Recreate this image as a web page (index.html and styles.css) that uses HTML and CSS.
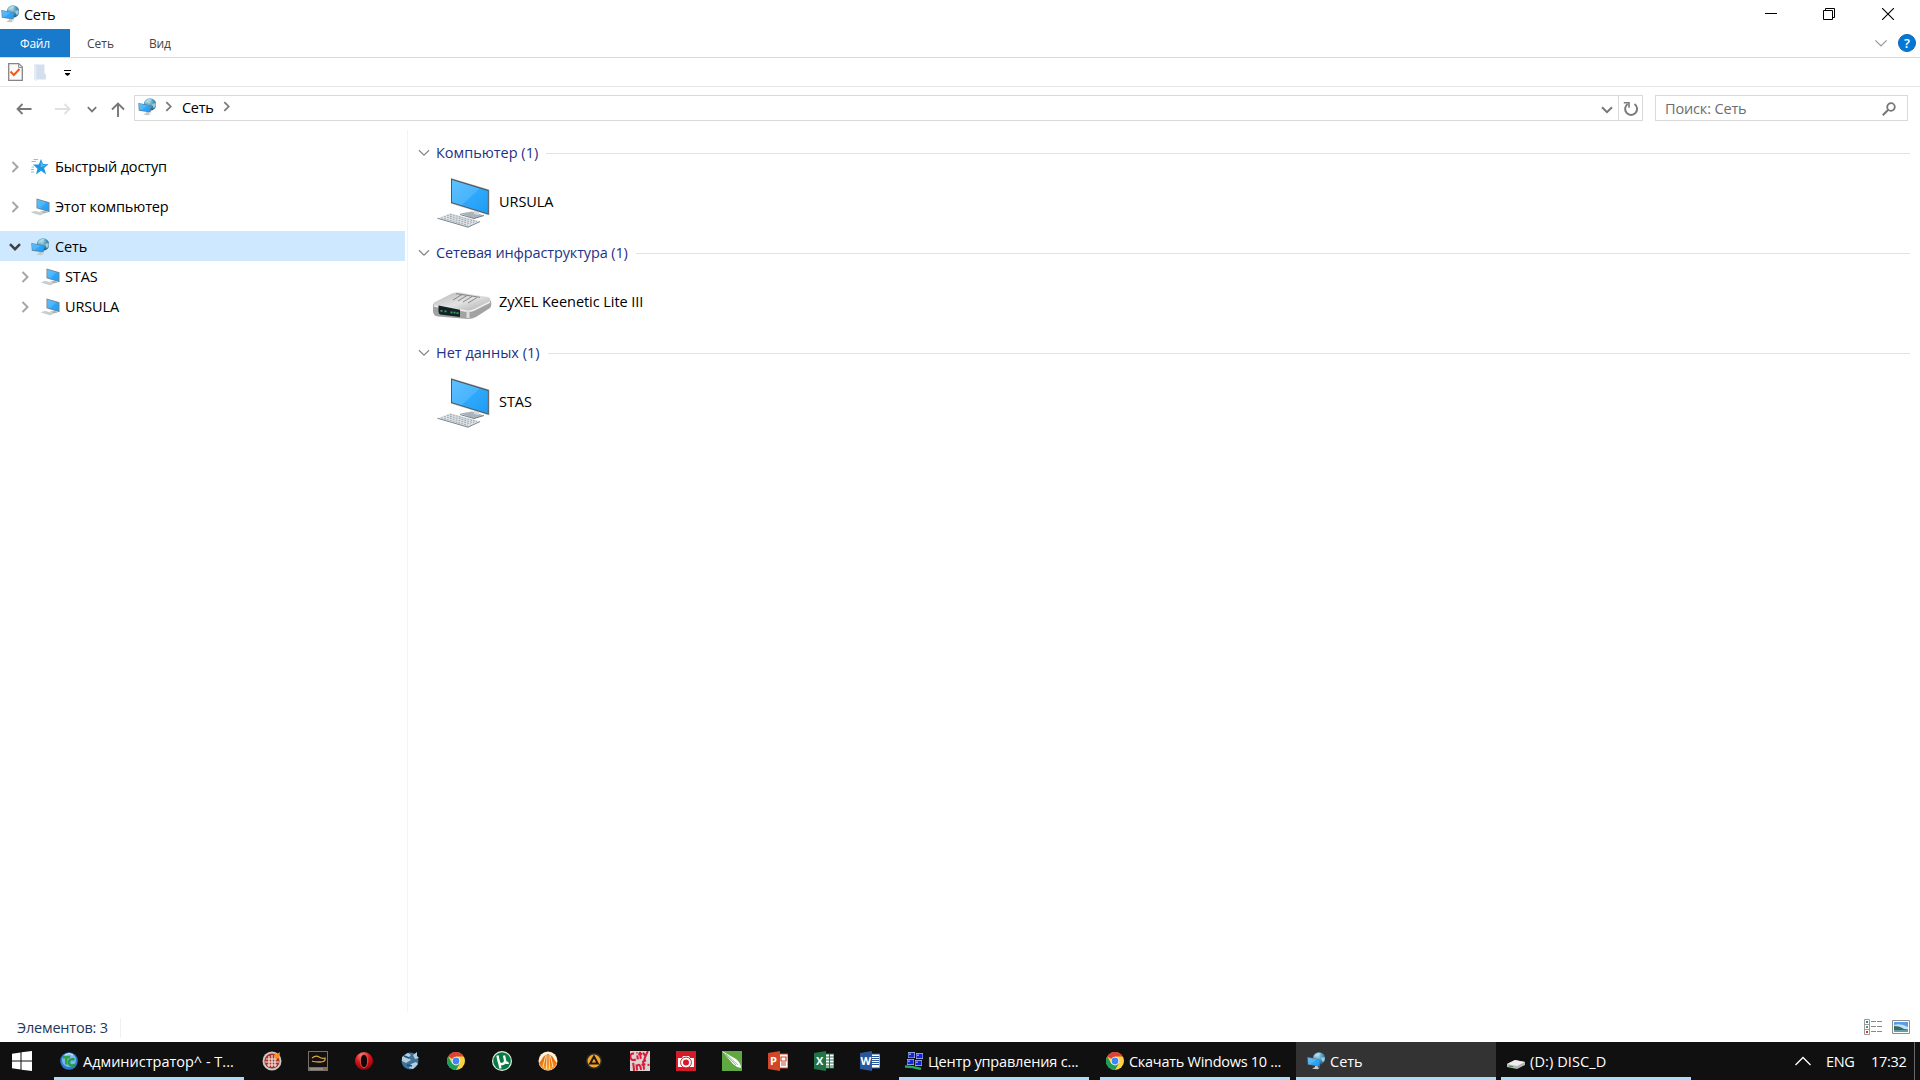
FILE: index.html
```html
<!DOCTYPE html>
<html lang="ru">
<head>
<meta charset="utf-8">
<title>Сеть</title>
<link rel="stylesheet" href="styles.css">
</head>
<body>
<svg class="defs" width="0" height="0" aria-hidden="true">
  <defs>
    <linearGradient id="screen" x1="0" y1="0" x2="1" y2="1"><stop offset="0" stop-color="#5fc0ff"/><stop offset=".5" stop-color="#49b4fc"/><stop offset=".52" stop-color="#2fa8fb"/><stop offset="1" stop-color="#1d9cf5"/></linearGradient>
    <radialGradient id="globe" cx=".4" cy=".3" r=".7"><stop offset="0" stop-color="#a5d8ea"/><stop offset=".55" stop-color="#4f98bb"/><stop offset="1" stop-color="#235e85"/></radialGradient>
    <linearGradient id="metal" x1="0" y1="0" x2="1" y2="1"><stop offset="0" stop-color="#b5b5b5"/><stop offset=".5" stop-color="#e2e2e2"/><stop offset="1" stop-color="#a9a9a9"/></linearGradient>
    <radialGradient id="red" cx=".4" cy=".2" r=".8"><stop offset="0" stop-color="#ff8a86"/><stop offset=".5" stop-color="#d8161b"/><stop offset="1" stop-color="#8d0009"/></radialGradient>
    <linearGradient id="orange" x1="0" y1="0" x2="0" y2="1"><stop offset="0" stop-color="#d95f0c"/><stop offset=".6" stop-color="#f07c12"/><stop offset="1" stop-color="#ffb43c"/></linearGradient>
  </defs>
  <symbol id="network" viewBox="0 0 18 18">
    <circle cx="12" cy="6.5" r="6.2" fill="url(#globe)"/>
    <path d="M7.5 3 11 .8l3 .6-2 2.200-3 .7-1.500 2zM14 6l3.500-1 .3 3-2 2.500z" fill="#b9dfe5" opacity=".8"/>
    <path d="M5 16.800 8 15v-1.500l3 .8v1.200l2 .3-2.500 1.400z" fill="#c3c9cd"/>
    <path d="M.3 4.900 12.700 7.300v7.200L.8 12.800z" fill="#62849b"/>
    <path d="M1 5.700 12 7.900v5.700L1.500 12.100z" fill="url(#screen)"/>
  </symbol>
  <symbol id="pc-small" viewBox="0 0 20 18">
    <path d="m10 13.500 5-.5 3 1.500-5 1z" fill="#a8b1b8"/>
    <path d="M6.500.5 19.500 4.300v9.900L6.500 10.300z" fill="#76838d"/>
    <path d="M7.300 1.600 18.600 4.900v8L7.300 9.600z" fill="url(#screen)"/>
    <path d="m.5 14.200 4.500-1.500 9.500 2.500-4.300 2.300z" fill="#d5d9dd"/>
    <path d="m2 14.300 9 2.200m-7-2.900 9 2.200" stroke="#b3bac0" stroke-width=".5"/>
  </symbol>
  <symbol id="pc-large" viewBox="0 0 54 51">
    <path d="m23 35.500 12-2 12 4-10 3z" fill="#abb3ba"/><path d="m23 36.500 14 4 10-3" fill="none" stroke="#737f89"/>
    <path d="M37 30h5v7l-5-1z" fill="#d5d9dc"/>
    <path d="M14 0 52.500 11.500v26L14 25.700z" fill="#c5ccd1"/>
    <path d="M14 .6 51.800 12v24.800L14 24.900z" fill="#4c565e"/>
    <path d="M15 2.100 50.900 13v22.400L15 24.200z" fill="url(#screen)"/>
    <path d="m.5 40.200 12.500-5 30.500 8L31 50z" fill="#e1e5e8"/>
    <path d="m.5 40.300 30.500 8.800 12-5.500" fill="none" stroke="#7d8891"/>
    <g stroke="#a3acb3" stroke-width="1.100" stroke-dasharray="2 1"><path d="m4 39.800 27 7.500"/><path d="m7 38.500 27 7.500"/><path d="m10 37.300 27 7.500"/><path d="m13 36.200 27 7.500"/></g>
  </symbol>
  <symbol id="router" viewBox="0 0 60 30">
    <path d="M1 13v8q1 4 5 4.500l30 2.500q4 0 8-2l14-9q2-2 1-7z" fill="#a2a2a2"/>
    <path d="M2 11.500 20 2.500q3-1.500 7-1l29 4.500q4 1.500 1.500 5l-17 9q-3 1-7 .6L3 15q-3-1-1-3.500z" fill="url(#metal)"/>
    <path d="m2 15 32 5q5 .5 8-1l16-8" fill="none" stroke="#eee" stroke-width="1.400"/>
    <path d="M6.500 14.500 28 18.800v7.200L8 23.500q-1.500-1-1.500-3z" fill="#15202b"/>
    <path d="M8.500 19.800h2m2 .5h2m4 1h2m1 .3h2m1 .5h2" stroke="#2fae4c" stroke-width="1.700"/>
    <path d="m21 9 9-5.500m-4 6.500 9-5.500m-4 6.500 9-5.500m-4 6.500 9-5.500M24 2.700l24 3.600" stroke="#858585" stroke-width="1"/>
    <path d="M36 21v6" stroke="#ddd" stroke-width="3"/>
  </symbol>
  <symbol id="chev-r" viewBox="0 0 8 12"><path d="m1.500 1 5 5-5 5" fill="none" stroke="currentColor" stroke-width="var(--w,2)"/></symbol>
  <symbol id="chev-d" viewBox="0 0 12 8"><path d="m1 1.200 5 5 5-5" fill="none" stroke="currentColor" stroke-width="var(--w,2)"/></symbol>
  <symbol id="chrome" viewBox="0 0 18 18">
    <circle cx="9" cy="9" r="9" fill="#fdd23f"/>
    <path d="M9 9 1.200 4.500A9 9 0 0 1 16.800 4.500H9z" fill="#da4335"/>
    <path d="M1.200 4.500A9 9 0 0 0 9 18l3.900-6.700L9 13.500 5.100 11.300z" fill="#1c9d58"/>
    <circle cx="9" cy="9" r="4.300" fill="#fff"/><circle cx="9" cy="9" r="3.400" fill="#4285f4"/>
  </symbol>
</svg>

<div class="window">
  <header class="titlebar">
    <svg class="i18"><use href="#network"/></svg>
    <h1 class="title">Сеть</h1>
    <div class="controls">
      <svg class="minimize" width="12" height="12" viewBox="0 0 12 12"><path d="M0 5.500h12" stroke="#000"/></svg>
      <svg width="12" height="12" viewBox="0 0 12 12" fill="none" stroke="#000"><path d="M.5 2.500h9v9h-9zM2.500 2V.5h9v9H10"/></svg>
      <svg width="12" height="12" viewBox="0 0 12 12"><path d="m0 0 12 12M12 0 0 12" stroke="#000" stroke-width="1.100"/></svg>
    </div>
  </header>
  <nav class="ribbon">
    <span class="tab file">Файл</span><span class="tab net">Сеть</span><span class="tab view">Вид</span>
    <svg class="expand"><use href="#chev-d"/></svg>
    <span class="help">?</span>
  </nav>
  <div class="quick">
    <svg width="15" height="18" viewBox="0 0 15 18"><path d="M.7.700h10L14.300 4v13.300H.7z" fill="#fafafa" stroke="#858585" stroke-width="1.300"/><path d="M10.500 1v3.500H14" fill="#ddd" stroke="#858585" stroke-width=".8"/><path d="m2.500 8.500 3.300 3.500L11.500 6" fill="none" stroke="#f05a14" stroke-width="1.900"/></svg>
    <svg class="folder" width="12" height="18" viewBox="0 0 12 18"><path d="M0 .5h10.500v9l1.500 1v5H0z" fill="#d3deef"/><path d="m0 .5 2.500 2V17.500L0 15.500z" fill="#e4ebf5"/></svg>
    <svg class="custom" width="7" height="6" viewBox="0 0 7 6"><path d="M0 0h7v1H0zM1 3h5v1L3.500 6 1 4z"/></svg>
  </div>
  <div class="navrow">
    <svg class="back" width="16" height="12" viewBox="0 0 16 12"><path d="M15.500 6H1.500M6.500 1l-5 5 5 5" fill="none" stroke="#777" stroke-width="1.800"/></svg>
    <svg class="forward" width="16" height="12" viewBox="0 0 16 12"><path d="M0 6h14M9.500 1l5 5-5 5" fill="none" stroke="#e0e0e0" stroke-width="1.800"/></svg>
    <svg class="recent"><use href="#chev-d"/></svg>
    <svg class="up" width="14" height="15" viewBox="0 0 14 15"><path d="M7 15V1.500M1 7.500l6-6 6 6" fill="none" stroke="#777" stroke-width="1.900"/></svg>
    <div class="address">
      <svg class="i18"><use href="#network"/></svg>
      <svg class="crumb"><use href="#chev-r"/></svg>
      <span class="place">Сеть</span>
      <svg class="crumb"><use href="#chev-r"/></svg>
      <svg class="drop"><use href="#chev-d"/></svg>
      <span class="refresh"><svg width="16" height="16" viewBox="0 0 16 16"><path d="M4.700 3A6 6 0 1 0 11.500 3" fill="none" stroke="#7b7b7b" stroke-width="2"/><path d="M.8 1.800H6v5" fill="none" stroke="#7b7b7b" stroke-width="1.600"/></svg></span>
    </div>
    <div class="search"><span>Поиск: Сеть</span><svg width="14" height="14" viewBox="0 0 14 14"><circle cx="9" cy="5" r="3.800" fill="none" stroke="#777" stroke-width="1.800"/><path d="M6.200 7.800.8 13.200" stroke="#777" stroke-width="2.100"/></svg></div>
  </div>
  <main class="body">
    <aside class="tree">
      <div class="node"><svg class="arrow"><use href="#chev-r"/></svg><svg class="ico" viewBox="0 0 20 18"><path d="m11 1 2 5 5.600.2-4.500 3.800 2 6.500L11 12.800 6 16.400l1.500-5.700L3 6.400h5.800z" fill="#1f96e2"/><path d="m11 3 1.700 4 4 .2-6 2z" fill="#5abdf5"/><path d="M3.500 1.500h4.500M1.500 3.500H6M1.500 9H4M1 11.500h3M1 14h3" stroke="#79c6f0"/></svg><span>Быстрый доступ</span></div>
      <div class="node"><svg class="arrow"><use href="#chev-r"/></svg><svg class="ico"><use href="#pc-small"/></svg><span>Этот компьютер</span></div>
      <div class="node selected"><svg class="arrow open"><use href="#chev-d"/></svg><svg class="ico net-ico"><use href="#network"/></svg><span>Сеть</span></div>
      <div class="node child"><svg class="arrow"><use href="#chev-r"/></svg><svg class="ico"><use href="#pc-small"/></svg><span>STAS</span></div>
      <div class="node child"><svg class="arrow"><use href="#chev-r"/></svg><svg class="ico"><use href="#pc-small"/></svg><span>URSULA</span></div>
    </aside>
    <section class="content">
      <div class="group">
        <div class="head"><svg><use href="#chev-d"/></svg><h2>Компьютер (1)</h2></div>
        <div class="item"><svg class="pc"><use href="#pc-large"/></svg><span>URSULA</span></div>
      </div>
      <div class="group">
        <div class="head"><svg><use href="#chev-d"/></svg><h2 class="long">Сетевая инфраструктура (1)</h2></div>
        <div class="item"><svg class="rt"><use href="#router"/></svg><span>ZyXEL Keenetic Lite III</span></div>
      </div>
      <div class="group">
        <div class="head"><svg><use href="#chev-d"/></svg><h2>Нет данных (1)</h2></div>
        <div class="item"><svg class="pc"><use href="#pc-large"/></svg><span>STAS</span></div>
      </div>
    </section>
  </main>
  <footer class="status">
    <span class="count">Элементов: 3</span>
    <svg class="details" width="18" height="16" viewBox="0 0 18 16"><path d="M.5.500h5v15h-5zM.5 5.500h5m-5 5h5" fill="#fff" stroke="#999"/><path d="M2 2h2v2H2z" fill="#3d7a98"/><path d="M2 7h2v2H2z" fill="#548b8b"/><path d="M2 12h2v2H2z" fill="#d63b22"/><path d="M7 2.500h5m1 0h5m-11 5h5m1 0h5m-11 5h5m1 0h5" stroke="#888"/></svg>
    <svg class="thumbs" width="18" height="14" viewBox="0 0 18 14"><path d="M.5.500h17v13H.5z" fill="#fff" stroke="#8d8d8d"/><path d="M2 2h14v10H2z" fill="#5a9bea"/><path d="M2 5q7-2 14 2v2H2z" fill="#c6e2f5"/><path d="M2 6q6 0 10 3l4 1H2z" fill="#3c6b59"/><path d="M2 10h14v2H2z" fill="#5f9fae"/></svg>
  </footer>
</div>

<footer class="taskbar">
  <svg class="start" width="20" height="20" viewBox="0 0 20 20" fill="#fff"><path d="M0 2.700 8.500 1.400v8H0zM9.500 1.200 20 0v9.400H9.500zM0 10.400h8.500v8.200L0 17.300zM9.500 10.400H20V20L9.500 18.700z"/></svg>
  <div class="task"><svg class="i18" viewBox="0 0 18 18"><circle cx="9" cy="9" r="8.800" fill="#2f78d0"/><circle cx="9" cy="8" r="7" fill="#75b9ef"/><path d="M3 4h7v2.500H7.500v6H5v-6H3z" fill="#36a045"/><path d="M14.500 7.500q-5.500-1-5.500 3t6 2.500" fill="none" stroke="#279a42" stroke-width="2.500"/><path d="M5 3q4-3 8 0" stroke="#d9f2ff" fill="none"/></svg><span>Администратор^ - T...</span></div>
  <div class="pins">
    <svg viewBox="0 0 20 20"><circle cx="10" cy="10" r="9.500" fill="#ccc8c5"/><circle cx="10" cy="10" r="7.600" fill="#a9332d"/><path d="M4 8h11M3 11h14M5 14h10M7 5v11m3-12v12m3-11v11" stroke="#f2e9e4" stroke-width="1.200"/><path d="m12 5 1-3 2 1 3-2-1 6-3 1z" fill="#ff8e1e"/></svg>
    <svg viewBox="0 0 20 20"><path d="M0 0h20v20H0z" fill="#77706b"/><path d="M1 1h18v15H1z" fill="#16110f"/><path d="M4 7q4-3 7-1t6 1q1 4-5 4t-8-1" fill="none" stroke="#d7a944" stroke-width="1.300"/><path d="M2 18h13" stroke="#aaa"/><path d="M17 17.500h1.500" stroke="#e24b20"/></svg>
    <svg viewBox="0 0 20 20"><circle cx="10" cy="10" r="9" fill="url(#red)"/><ellipse cx="10" cy="10" rx="3.700" ry="6.800" fill="#170405" stroke="#f06560" stroke-width=".8"/></svg>
    <svg viewBox="0 0 20 20"><circle cx="10" cy="10" r="8.500" fill="#3f7299"/><path d="m2 6 6-4 3 2-3 3 3 2-5 3-4-2zM13 4l4-3v4l2 2-4 1zM11 13l5-2 2 2-5 5-4-1z" fill="#b3cfdf"/><path d="m4 5 5 2M7 14l5 1" stroke="#234c6d" stroke-width="1.500"/></svg>
    <svg viewBox="-1 -1 20 20"><use href="#chrome" width="18" height="18"/></svg>
    <svg viewBox="0 0 20 20"><circle cx="10" cy="10" r="10" fill="#e6f0e8"/><circle cx="10" cy="10" r="8.800" fill="#087b43"/><path d="M5.500 4.500 6.500 10q1 3.500 4 3t2.500-4L12 4.500m1 5q1 3.500 3.500 2M6.500 9l2 8.500" fill="none" stroke="#fff" stroke-width="2.300"/></svg>
    <svg viewBox="0 0 20 20"><circle cx="10" cy="10" r="9.500" fill="#fff0d8"/><path d="M1 12Q3 10 4 8l2-3 1.500-.5L10 3l2.500 1.500L14 5l2 3q1 2 3 4-2 7-9 7.500Q3 19 1 12z" fill="url(#orange)"/><path d="M7.500 5 5 16m4-12-.5 14m2.500-14 .5 14m1-13L15 16" stroke="#ffdfae" fill="none"/></svg>
    <svg viewBox="0 0 20 20"><circle cx="10" cy="10" r="8" fill="#2b2b2b"/><circle cx="10" cy="10" r="6.500" fill="#f5a52b"/><path d="m10 5.500-3.800 7h7.600z" fill="none" stroke="#20170a" stroke-width="2"/></svg>
    <svg viewBox="0 0 20 20"><path d="M0 0h20v20H0z" fill="#d9d4d4"/><g fill="none" stroke="#df1835" stroke-width="2" transform="rotate(-7 10 10)"><path d="M5 2Q1 1 1 5t5 3M8 4v4m0-7v1m3-1v7m-2-5h4m1-1 2 4 3-5m-3 5-2 4M3 11v8m3-6v6m0-4q4-4 4 4m3 0v-8l3-1m-5 4h4m2 1h2"/></g></svg>
    <svg viewBox="0 0 20 20"><path d="M0 0h20v20H0z" fill="#d41c29"/><path d="M2 7h4l1-2h6l1 2h4v9H2z" fill="#fff"/><circle cx="10" cy="11.500" r="5.400" fill="#fff" stroke="#d41c29"/><circle cx="10" cy="11.500" r="3" fill="#d41c29"/></svg>
    <svg viewBox="0 0 20 20"><path d="M0 0h20v20H0z" fill="#60a842"/><path d="M0 0 14 8q5 4 5 9-5-1-8-4z" fill="#fff"/><path d="m4 3 12 11M2 2l12 12" stroke="#7eb666" stroke-width=".8"/></svg>
    <svg viewBox="0 0 20 20"><path d="M11 3h9v14h-9z" fill="#fff" stroke="#d04727"/><path d="M13 6h5v4h-5zm0 6h5m-5 2h5" fill="none" stroke="#d04727" stroke-width="1.200"/><path d="m0 2 12-2v20L0 18z" fill="#d24726"/><text x="2" y="14" class="office">P</text></svg>
    <svg viewBox="0 0 20 20"><path d="M11 3h9v14h-9z" fill="#fff" stroke="#217346"/><path d="M11 6h9m-9 3h9m-9 3h9m-9 3h9M15.500 3v14" stroke="#217346"/><path d="m0 2 12-2v20L0 18z" fill="#217346"/><text x="2" y="14" class="office">X</text></svg>
    <svg viewBox="0 0 20 20"><path d="M11 3h9v14h-9z" fill="#fff" stroke="#2b579a"/><path d="M12 5.500h7m-7 2h7m-7 2h7m-7 2h7m-7 2h7" stroke="#2b579a"/><path d="m0 2 12-2v20L0 18z" fill="#2b579a"/><text x="0.500" y="14" class="office">W</text></svg>
  </div>
  <div class="task"><svg class="i18" viewBox="0 0 18 18"><path d="M3 0h7v6H3zM11 1h7v6h-7zM2 7h7v6H2zM10 8h7v6h-7z" fill="#b8c2dc"/><path d="M3.500.800h5.800v4.600H3.500zM11.500 1.700h6v4.600h-6zM2.500 7.700h6v4.600h-6zM10.500 8.700h6v4.600h-6z" fill="#1524d5"/><path d="M4 1.500h2v1.500H4zM12 2.500h2V4h-2zM3 8.500h2V10H3zM11 9.500h2V11h-2z" fill="#7e9bff"/><path d="M0 14.500q8 0 16 2.500" fill="none" stroke="#27ac5f" stroke-width="2.500"/></svg><span class="tight">Центр управления с...</span></div>
  <div class="task"><svg class="i18"><use href="#chrome"/></svg><span class="tighter">Скачать Windows 10 ...</span></div>
  <div class="task active"><svg class="i18"><use href="#network"/></svg><span>Сеть</span></div>
  <div class="task"><svg class="i18" viewBox="0 0 18 18"><path d="m0 12 8-4 10 2v3l-8 4-10-2z" fill="#b5b5b5"/><path d="m0 12 8-4 10 2-8 4z" fill="#eee"/><path d="m2 14 4 .7" stroke="#3d9146"/></svg><span class="disc">(D:) DISC_D</span></div>
  <div class="tray"><svg width="16" height="10" viewBox="0 0 16 10"><path d="m.5 9 7.500-7.500L15.500 9" fill="none" stroke="#fff" stroke-width="1.300"/></svg><span class="lang">ENG</span><span class="clock">17:32</span><i></i></div>
</footer>
</body>
</html>
```
FILE: styles.css
```css
* { box-sizing: border-box; }
html, body { margin: 0; height: 100%; }
body { display: flex; flex-direction: column; width: 1920px; height: 1080px; overflow: hidden; background: #fff; color: #000; font: 14.5px/20px "Open Sans", "Noto Sans", sans-serif; white-space: nowrap; }
svg { display: block; flex: none; }
h1, h2 { margin: 0; font: inherit; }
.defs { position: absolute; }
.i18 { width: 18px; height: 18px; }
.window { display: flex; flex-direction: column; height: 1042px; }

.titlebar { display: flex; height: 29px; padding: 5px 16px 0 1px; }
.title { margin-left: 5px; letter-spacing: -.4px; }
.controls { display: flex; gap: 47px; margin-left: auto; padding: 3px 10px 0 0; }
.minimize { margin-right: -1px; }

.ribbon { display: flex; height: 29px; border-bottom: 1px solid #dadbdc; font-size: 12px; line-height: 29px; color: #444; }
.tab { letter-spacing: -.2px; }
.file { width: 70px; height: 28px; background: #1979ca; color: #fff; text-align: center; }
.net { margin-left: 17px; width: 62px; letter-spacing: 0; }
.expand { width: 14px; height: 9px; margin: 10px 10px 0 auto; color: #999; --w: 1.1; }
.help { width: 18px; height: 18px; margin: 5px 4px 0 0; border-radius: 50%; background: #0078d7; border: 1px solid #1663ac; color: #fff; font-size: 13px; font-weight: 600; line-height: 16px; text-align: center; }

.quick { display: flex; height: 29px; padding: 5px 0 0 8px; border-bottom: 1px solid #e8e8e8; }
.folder { margin: 1px 0 0 11px; }
.custom { margin: 7px 0 0 18px; }

.navrow { display: flex; height: 44px; padding: 8px 12px 0 16px; }
.back, .forward { margin-top: 8px; }
.forward { margin-left: 23px; }
.recent { width: 10px; height: 7px; margin: 11px 0 0 16px; color: #777; --w: 2.2; }
.up { margin: 7px 9px 0 14px; }
.address { display: flex; flex: none; width: 1509px; height: 26px; margin-right: 12px; padding-left: 3px; border: 1px solid #d9d9d9; }
.address .i18 { margin-top: 2px; }
.crumb { width: 7px; height: 11px; margin: 5px 0 0 9px; color: #777; }
.place { width: 31px; margin: 2px 0 0 10px; letter-spacing: -.3px; }
.place + .crumb { margin-left: 10px; }
.drop { width: 12px; height: 8px; margin: 10px 5px 0 auto; color: #777; }
.refresh { width: 24px; padding: 5px 0 0 4px; border-left: 1px solid #d9d9d9; }
.search { display: flex; flex: none; justify-content: space-between; width: 253px; height: 26px; padding: 3px 11px 0 9px; border: 1px solid #d9d9d9; color: #6d6d6d; letter-spacing: -.15px; }
.search svg { margin-top: 3px; }

.body { display: flex; flex: 1; }
.tree { width: 408px; height: 882px; padding-top: 21px; border-right: 1px solid #f3f3f3; letter-spacing: -.14px; }
.node { display: flex; align-items: center; width: 405px; height: 30px; padding: 2px 0 0 11px; margin-bottom: 10px; }
.node.selected, .node.child { margin-bottom: 0; }
.node.child { padding-left: 21px; }
.selected { background: #cde8ff; }
.arrow { width: 8px; height: 12px; margin-right: 11px; color: #a6a6a6; }
.arrow.open { width: 12px; height: 8px; margin: 0 9px 0 -2px; color: #404040; --w: 2.5; }
.ico { width: 20px; height: 18px; margin-right: 5px; }
.net-ico { width: 18px; margin: 0 6px 0 1px; }

.content { flex: 1; padding: 13px 10px 0 11px; }
.group { height: 100px; }
.head { display: flex; align-items: center; height: 20px; color: #1e3287; }
.head svg { width: 12px; height: 8px; margin: 0 6px 0 -1px; color: #888; --w: 1.3; }
.head::after { content: ""; flex: 1; height: 1px; margin-left: 8px; background: #e2e2e2; }
.long { letter-spacing: -.13px; }
.item { display: flex; padding: 15px 0 0 13px; }
.item span { margin: 14px 0 0 7px; letter-spacing: -.05px; }
.pc { width: 54px; height: 51px; margin: 0 1px 0 5px; }
.rt { width: 60px; height: 30px; margin-top: 13px; }

.status { display: flex; height: 30px; padding: 6px 10px 0 17px; color: #1e395b; }
.count { width: 104px; border-right: 1px solid #f0f0f0; height: 20px; letter-spacing: -.2px; }
.details { margin: 1px 10px 0 auto; }
.thumbs { margin-top: 2px; }

.taskbar { display: flex; height: 38px; background: #101010; color: #fff; }
.start { margin: 9px 17px 0 12px; }
.task { display: flex; position: relative; width: 200px; height: 38px; margin-right: 1px; padding: 10px 0 0 11px; }
.task::after { content: ""; position: absolute; left: 5px; right: 5px; bottom: 0; height: 3px; background: #a9dcfb; }
.task.active { background: #333; margin-right: 0; }
.task.active::after { left: 0; right: 0; }
.task span { margin: 0 0 0 5px; }
.task .tight { letter-spacing: -.17px; }
.task .tighter { letter-spacing: -.27px; }
.task .disc { letter-spacing: .1px; }
.pins { display: flex; gap: 26px; padding-left: 12px; width: 644px; }
.pins svg { width: 20px; height: 20px; margin-top: 9px; }
.office { fill: #fff; font: bold 11px "Open Sans", sans-serif; }
.tray { display: flex; margin-left: auto; }
.tray svg { margin: 14px 0 0 -1px; }
.lang { margin: 10px 0 0 15px; width: 45px; letter-spacing: -.3px; }
.clock { margin-top: 10px; width: 43px; letter-spacing: -.3px; }
.tray i { width: 6px; height: 38px; border-left: 1px solid #686868; }
```
